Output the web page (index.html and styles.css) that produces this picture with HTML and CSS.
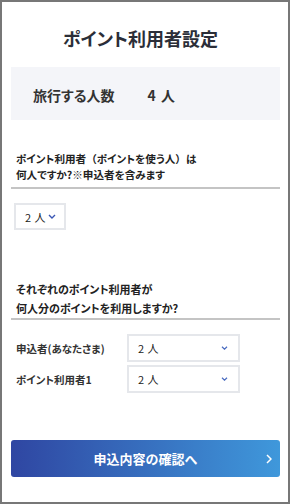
FILE: index.html
```html
<!DOCTYPE html>
<html lang="ja">
<head>
  <meta charset="UTF-8">
  <meta name="viewport" content="width=device-width, initial-scale=1.0">
  <title>ポイント利用者設定</title>
  <link rel="stylesheet" href="styles.css">
</head>
<body>
  <div class="page">
    <h1 class="page-title">ポイント利用者設定</h1>

    <div class="travel-count">
      <span class="travel-label">旅行する人数</span>
      <span class="travel-value">4 人</span>
    </div>

    <div class="question">
      <p class="question-text">ポイント利用者<span class="wide">（</span>ポイントを使う人<span class="wide">）</span>は<br>何人ですか?※申込者を含みます</p>
    </div>
    <div class="select select-small">
      <span class="num">2 人</span>
      <svg class="chev" width="8" height="5" viewBox="0 0 8 5"><path d="M1 1l3 3 3-3" fill="none" stroke="#3a56b4" stroke-width="1.4"/></svg>
    </div>

    <div class="question question-second">
      <p class="question-text">それぞれのポイント利用者が<br>何人分のポイントを利用しますか?</p>
    </div>
    <div class="user-rows">
      <div class="user-row">
        <span class="user-label">申込者(あなたさま)</span>
        <div class="select select-wide">
          <span class="num">2 人</span>
          <svg class="chev" width="7" height="4" viewBox="0 0 7 4"><path d="M1 .8l2.5 2.4L6 .8" fill="none" stroke="#4a6cc0" stroke-width="1.2"/></svg>
        </div>
      </div>
      <div class="user-row">
        <span class="user-label">ポイント利用者1</span>
        <div class="select select-wide">
          <span class="num">2 人</span>
          <svg class="chev" width="7" height="4" viewBox="0 0 7 4"><path d="M1 .8l2.5 2.4L6 .8" fill="none" stroke="#4a6cc0" stroke-width="1.2"/></svg>
        </div>
      </div>
    </div>

    <button class="btn-next">
      <span>申込内容の確認へ</span>
      <svg class="btn-arrow" width="6" height="10" viewBox="0 0 6 10"><path d="M1 1l4 4-4 4" fill="none" stroke="#fff" stroke-width="1.5"/></svg>
    </button>
  </div>
</body>
</html>
```

FILE: styles.css
```css
* {
  box-sizing: border-box;
}
body {
  margin: 0;
  font-family: "Noto Sans CJK JP", "Noto Sans", sans-serif;
  font-feature-settings: "palt";
  color: #222;
  background: #fff;
}
.page {
  width: 290px;
  height: 504px;
  border: 2px solid #777;
  padding: 24px 8px 0 9px;
  background: #fff;
}
.page-title {
  margin: 0 0 17px;
  padding-right: 10px;
  font-size: 18px;
  line-height: 24px;
  text-align: center;
  color: #2b2e38;
}
.travel-count {
  display: flex;
  align-items: center;
  height: 53px;
  padding: 3px 22px 0;
  background: #f4f5f9;
  font-size: 14px;
  font-weight: bold;
  color: #333;
}
.travel-value {
  margin-left: 33px;
  letter-spacing: 1px;
}
.question {
  margin-top: 31px;
  padding: 0 5px 4px;
  border-bottom: 2px solid #c4c4c4;
}
.question-text {
  margin: 0;
  font-size: 10.6px;
  font-weight: bold;
  line-height: 16px;
}
.wide {
  font-feature-settings: normal;
}
.question-second {
  margin-top: 50px;
  padding-bottom: 0;
}
.question-second .question-text {
  font-size: 11px;
  line-height: 19px;
}
.select {
  display: flex;
  align-items: center;
  justify-content: space-between;
  height: 27px;
  border: 2px solid #e5e7eb;
  background: #fff;
  font-size: 11px;
  color: #222;
}
.num {
  letter-spacing: 0.5px;
}
.select-small {
  width: 52px;
  margin: 14px 0 0 3px;
  padding: 0 8px 0 9px;
}
.select-wide {
  width: 113px;
  height: 28px;
  padding: 0 10px 0 9px;
}
.chev {
  display: block;
}
.user-rows {
  display: flex;
  flex-direction: column;
  gap: 3px;
  margin-top: 14px;
}
.user-row {
  display: grid;
  grid-template-columns: 116px 113px;
  align-items: center;
}
.user-label {
  padding-left: 5px;
  font-size: 10.5px;
  font-weight: bold;
  color: #333;
}
.btn-next {
  position: relative;
  display: flex;
  align-items: center;
  justify-content: center;
  width: 100%;
  height: 37px;
  margin-top: 47px;
  border: none;
  border-radius: 3px;
  background: linear-gradient(90deg, #2f46a2, #3f98db);
  color: #fff;
  font-family: inherit;
  font-size: 13px;
  font-weight: bold;
}
.btn-arrow {
  position: absolute;
  right: 8px;
  top: 14px;
}
```
